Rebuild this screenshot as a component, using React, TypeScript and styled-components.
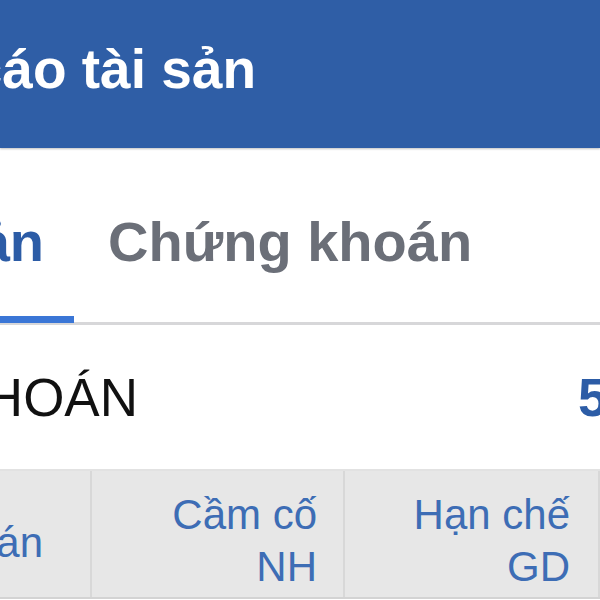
import React from "react";
import styled, { createGlobalStyle } from "styled-components";

const GlobalStyle = createGlobalStyle`
  html, body { margin: 0; padding: 0; background: #ffffff; overflow: hidden; }
  body { font-family: "Liberation Sans", Arial, "Noto Sans", sans-serif; }
  * { box-sizing: border-box; }
`;

const Page = styled.div`
  width: 600px;
  height: 600px;
  overflow: hidden;
  display: flex;
  flex-direction: column;
  background: #ffffff;
`;

const Header = styled.header`
  height: 148px;
  flex-shrink: 0;
  background: #2f5ea6;
  box-shadow: 0 1px 2px rgba(0, 0, 0, 0.25);
  display: flex;
  padding-top: 42px;
  position: relative;
  z-index: 1;
`;

/* Box whose right edge is fixed; longer text overflows out of view to the left */
const RightAnchor = styled.div<{ $w: number }>`
  width: ${(p) => p.$w}px;
  flex-shrink: 0;
  display: flex;
  justify-content: flex-end;
`;

const Title = styled.h1`
  margin: 0;
  flex-shrink: 0;
  white-space: nowrap;
  font-size: 55px;
  line-height: 1;
  font-weight: 700;
  color: #ffffff;
`;

const TabBar = styled.nav`
  height: 177px;
  flex-shrink: 0;
  display: flex;
  border-bottom: 3px solid #d7d7d9;
`;

const Tab = styled.div<{ $active?: boolean; $w?: number }>`
  height: 175px;
  display: flex;
  justify-content: ${(p) => (p.$w ? "flex-end" : "flex-start")};
  ${(p) => (p.$w ? `width: ${p.$w}px;` : "")}
  flex-shrink: 0;
  padding: 66px 30px 0 ${(p) => (p.$w ? 0 : 34)}px;
  border-bottom: 7px solid ${(p) => (p.$active ? "#3a76d6" : "transparent")};
`;

const TabLabel = styled.span<{ $active?: boolean }>`
  flex-shrink: 0;
  white-space: nowrap;
  font-size: 56px;
  line-height: 1;
  font-weight: 700;
  color: ${(p) => (p.$active ? "#2c5ca6" : "#6b6f78")};
`;

const SectionRow = styled.div`
  height: 146px;
  flex-shrink: 0;
  display: flex;
  justify-content: space-between;
  padding-top: 46px;
  border-bottom: 2px solid #e2e2e2;
`;

const SectionLabel = styled.span`
  flex-shrink: 0;
  white-space: nowrap;
  font-size: 53px;
  line-height: 1;
  font-weight: 400;
  color: #111111;
`;

const SectionValue = styled.span`
  width: 22px;
  flex-shrink: 0;
  white-space: nowrap;
  font-size: 53px;
  line-height: 1;
  font-weight: 700;
  color: #2c5ca6;
`;

const TableHead = styled.div`
  height: 128px;
  flex-shrink: 0;
  display: grid;
  grid-template-columns: 92px 253px 1fr;
  background: #e7e7e7;
  border-bottom: 2px solid #d3d3d3;
`;

const HeadCell = styled.div<{ $top: number; $right: number }>`
  display: flex;
  justify-content: flex-end;
  text-align: right;
  padding: ${(p) => p.$top}px ${(p) => p.$right}px 0 0;
  border-right: 2px solid #d8d8d8;
  font-size: 42px;
  line-height: 52px;
  color: #3d6db5;
  overflow: visible;
`;

const HeadText = styled.span`
  flex-shrink: 0;
  white-space: nowrap;
`;

export default function App() {
  return (
    <>
      <GlobalStyle />
      <Page>
        <Header>
          <RightAnchor $w={256}>
            <Title>Báo cáo tài sản</Title>
          </RightAnchor>
        </Header>
        <TabBar>
          <Tab $active $w={74}>
            <RightAnchor $w={48}>
              <TabLabel $active>Tài sản</TabLabel>
            </RightAnchor>
          </Tab>
          <Tab>
            <TabLabel>Chứng khoán</TabLabel>
          </Tab>
        </TabBar>
        <SectionRow>
          <RightAnchor $w={138}>
            <SectionLabel>CHỨNG KHOÁN</SectionLabel>
          </RightAnchor>
          <SectionValue>5,000,000</SectionValue>
        </SectionRow>
        <TableHead>
          <HeadCell $top={46} $right={47}>
            <HeadText>Mã chứng khoán</HeadText>
          </HeadCell>
          <HeadCell $top={18} $right={26}>
            <HeadText>
              Cầm cố
              <br />
              NH
            </HeadText>
          </HeadCell>
          <HeadCell $top={18} $right={28}>
            <HeadText>
              Hạn chế
              <br />
              GD
            </HeadText>
          </HeadCell>
        </TableHead>
      </Page>
    </>
  );
}
